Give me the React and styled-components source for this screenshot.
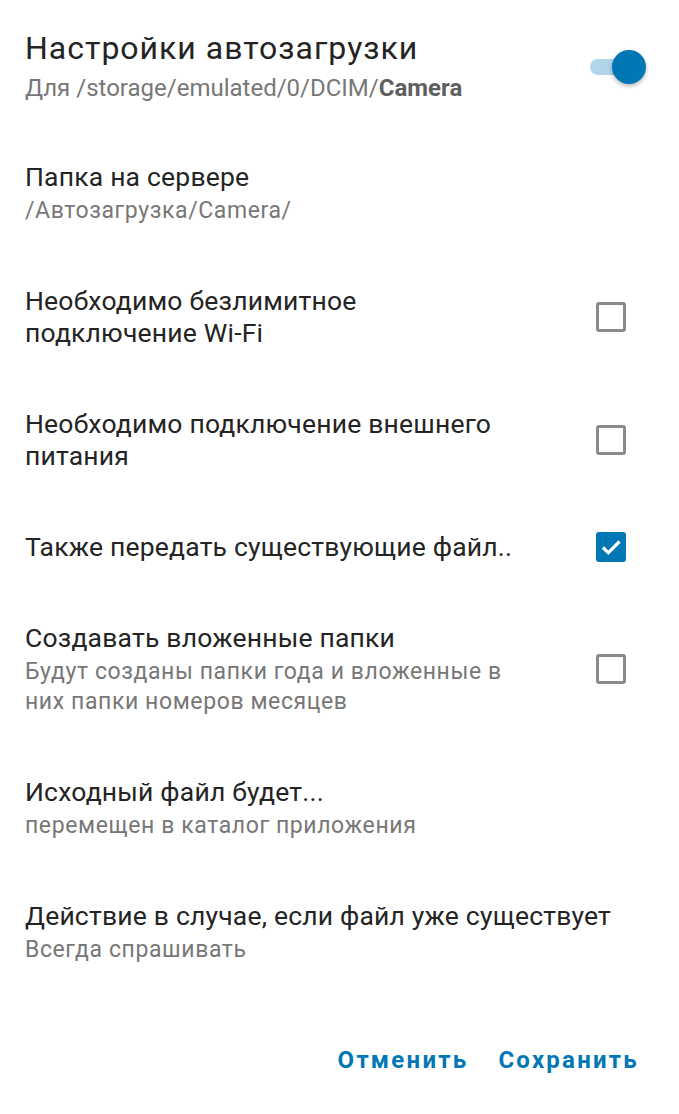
import React from 'react';
import styled, { createGlobalStyle } from 'styled-components';

const GlobalStyle = createGlobalStyle`
    body {
        margin: 0;
        background: #ffffff;
        font-family: Roboto, "Noto Sans", sans-serif;
    }
`

const Page = styled.div`
    width: 679px;
    min-height: 1114px;
    box-sizing: border-box;
    padding: 28px 0 0 25px;
    display: flex;
    flex-direction: column;
`

const Row = styled.div`
    display: flex;
    align-items: center;
    justify-content: space-between;
    padding: ${p => p.header ? '0 0 29px' : '29.5px 0'};
`

const Texts = styled.div`
    display: flex;
    flex-direction: column;
    max-width: ${p => p.narrow ? '510px' : 'none'};
`

const Titulo = styled.div`
    font-size: ${p => p.big ? '32px' : '26.5px'};
    line-height: ${p => p.big ? '40px' : '32px'};
    letter-spacing: ${p => p.big ? '1px' : '0.2px'};
    color: #242424;
`

const Sub = styled.div`
    font-size: ${p => p.big ? '24px' : '23px'};
    line-height: ${p => p.big ? '28px' : '30px'};
    letter-spacing: ${p => p.big ? '0' : '0.6px'};
    color: #777777;
    margin-top: ${p => p.big ? '6px' : '3px'};

    b {
        font-weight: 700;
        color: #5f5f5f;
    }
`

const Controle = styled.div`
    width: 60px;
    margin-right: 38px;
    display: flex;
    justify-content: center;
`

const Caixa = styled.div`
    width: 30px;
    height: 30px;
    box-sizing: border-box;
    border-radius: 3px;
    border: ${p => p.checked ? 'none' : '3px solid #8a8a8a'};
    background: ${p => p.checked ? '#0277b5' : 'transparent'};
    display: flex;
    align-items: center;
    justify-content: center;
`

const Interruptor = styled.div`
    position: relative;
    width: 50px;
    height: 16px;
    border-radius: 8px;
    background: #b1d6ea;
    margin-right: 39px;
    margin-top: 4px;
`

const Bolinha = styled.div`
    position: absolute;
    right: -6px;
    top: -9px;
    width: 34px;
    height: 34px;
    border-radius: 50%;
    background: #0277b5;
    box-shadow: 0 2px 4px rgba(0, 0, 0, 0.3);
`

const Rodape = styled.div`
    display: flex;
    justify-content: flex-end;
    gap: 30px;
    margin-top: 52px;
    padding-right: 40px;
`

const Botao = styled.button`
    background: none;
    border: none;
    padding: 0;
    font-family: Roboto, "Noto Sans", sans-serif;
    font-size: 24px;
    line-height: 28px;
    font-weight: 700;
    letter-spacing: 2.25px;
    color: #0277b5;
`

const Check = () => (
    <svg width="30" height="30" viewBox="0 0 30 30">
        <path d="M7 15.5l5.3 5.3L23.5 9.5" fill="none" stroke="#fff" strokeWidth="3.2" />
    </svg>
)

const itens = [
    { titulo: 'Папка на сервере', sub: '/Автозагрузка/Camera/' },
    { titulo: 'Необходимо безлимитное подключение Wi-Fi', caixa: false },
    { titulo: 'Необходимо подключение внешнего питания', caixa: false },
    { titulo: 'Также передать существующие файл..', caixa: true },
    { titulo: 'Создавать вложенные папки', sub: 'Будут созданы папки года и вложенные в них папки номеров месяцев', caixa: false },
    { titulo: 'Исходный файл будет...', sub: 'перемещен в каталог приложения' },
    { titulo: 'Действие в случае, если файл уже существует', sub: 'Всегда спрашивать' },
]

export default function App() {
    return (
        <Page>
            <GlobalStyle />
            <Row header>
                <Texts>
                    <Titulo big>Настройки автозагрузки</Titulo>
                    <Sub big>Для /storage/emulated/0/DCIM/<b>Camera</b></Sub>
                </Texts>
                <Interruptor>
                    <Bolinha />
                </Interruptor>
            </Row>
            {itens.map(item => {
                const temCaixa = item.caixa !== undefined
                return (
                    <Row key={item.titulo}>
                        <Texts narrow={temCaixa}>
                            <Titulo>{item.titulo}</Titulo>
                            {item.sub && <Sub>{item.sub}</Sub>}
                        </Texts>
                        {temCaixa && (
                            <Controle>
                                <Caixa checked={item.caixa}>{item.caixa && <Check />}</Caixa>
                            </Controle>
                        )}
                    </Row>
                )
            })}
            <Rodape>
                <Botao>Отменить</Botao>
                <Botao>Сохранить</Botao>
            </Rodape>
        </Page>
    );
}
